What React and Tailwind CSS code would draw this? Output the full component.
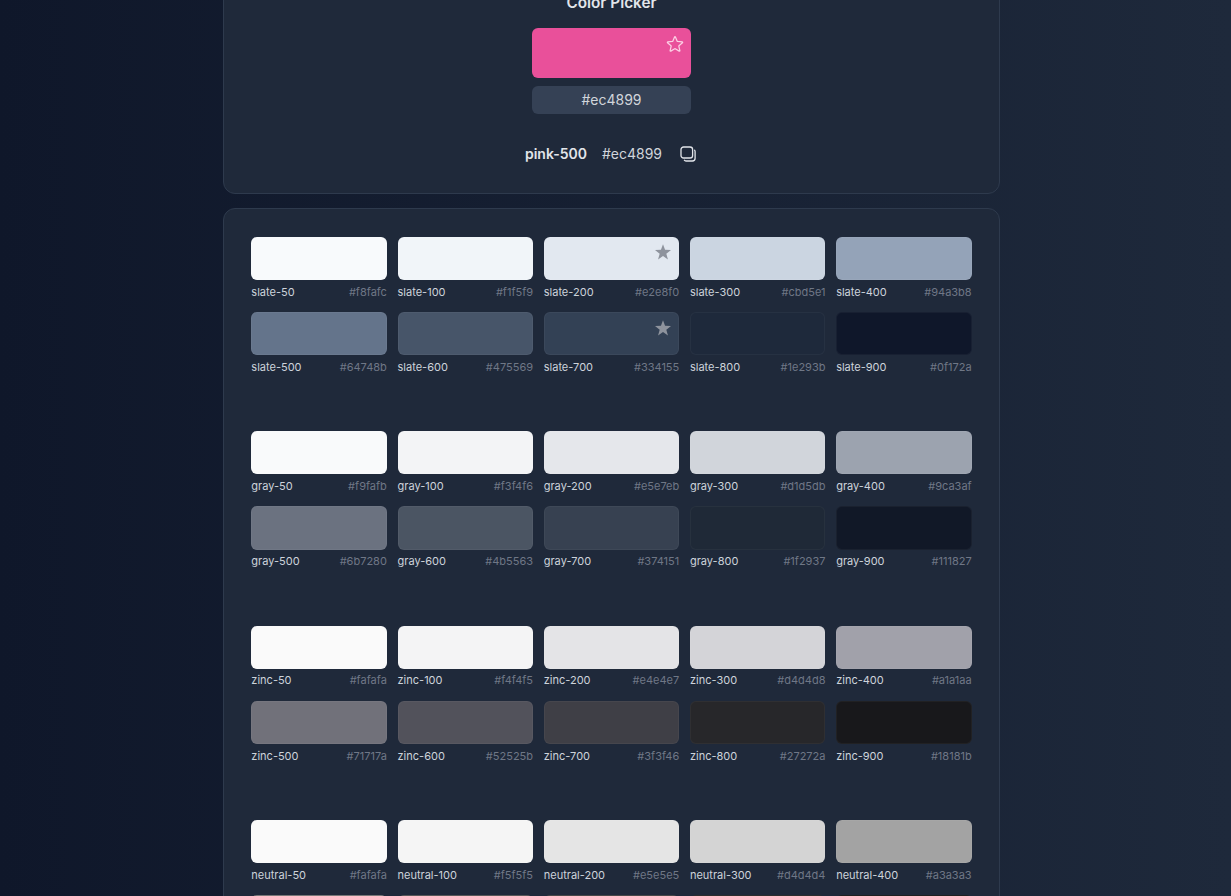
import { HiOutlineStar } from "react-icons/hi2";

const palettes = [
  {
    name: "slate",
    colors: ["#f8fafc", "#f1f5f9", "#e2e8f0", "#cbd5e1", "#94a3b8", "#64748b", "#475569", "#334155", "#1e293b", "#0f172a"],
    starred: [200, 700],
  },
  {
    name: "gray",
    colors: ["#f9fafb", "#f3f4f6", "#e5e7eb", "#d1d5db", "#9ca3af", "#6b7280", "#4b5563", "#374151", "#1f2937", "#111827"],
  },
  {
    name: "zinc",
    colors: ["#fafafa", "#f4f4f5", "#e4e4e7", "#d4d4d8", "#a1a1aa", "#71717a", "#52525b", "#3f3f46", "#27272a", "#18181b"],
  },
  {
    name: "neutral",
    colors: ["#fafafa", "#f5f5f5", "#e5e5e5", "#d4d4d4", "#a3a3a3", "#737373", "#525252", "#404040", "#262626", "#171717"],
  },
];

const shades = [50, 100, 200, 300, 400, 500, 600, 700, 800, 900];

function FilledStar() {
  return (
    <svg viewBox="0 0 16 16" className="absolute top-[6.5px] right-[7px] w-4 h-4 text-[#8e939d]">
      <polygon
        fill="currentColor"
        points="8,0.2 10.06,5.77 16,6 11.33,9.68 12.94,15.4 8,12.1 3.06,15.4 4.67,9.68 0,6 5.94,5.77"
      />
    </svg>
  );
}

function CopyIcon() {
  return (
    <svg viewBox="0 0 16 16" fill="none" stroke="currentColor" strokeWidth="1.3" className="ml-[3px] mr-[2px] w-4 h-4 text-[#e2e5ea]">
      <rect x="1" y="1" width="11.6" height="11" rx="2.6" />
      <path d="M14.6 4.2c.3.4.5.9.5 1.5v6.6c0 1.5-1.2 2.7-2.7 2.7H6.2c-.7 0-1.3-.3-1.8-.7" strokeLinecap="round" />
    </svg>
  );
}

function Swatch({ name, shade, hex, starred }) {
  return (
    <div>
      <div
        className="relative h-[43.3px] rounded-md border border-white/[0.04]"
        style={{ backgroundColor: hex }}
      >
        {starred && <FilledStar />}
      </div>
      <div className="mt-[4.7px] h-[15px] flex items-center justify-between text-[11px] leading-[15px]">
        <span className="text-[#cdd3db]">{name}-{shade}</span>
        <span className="text-[#6f7786]">{hex}</span>
      </div>
    </div>
  );
}

export default function App() {
  return (
    <div
      className="h-screen overflow-hidden bg-gradient-to-r from-[#0f172a] to-[#1e293b] flex justify-center pr-2"
      style={{ fontFamily: "Inter, 'Liberation Sans', sans-serif" }}
    >
      <div className="w-[777px] shrink-0 -mt-[37px] flex flex-col gap-[14px]">
        {/* Picker */}
        <div className="shrink-0 rounded-xl border border-[#2e3a4d] bg-[#1f293a] p-[27px] flex flex-col items-center">
          <h1 className="h-6 mb-[13px] text-[15.3px] leading-6 font-semibold text-[#e2e5ea]">Color Picker</h1>
          <div className="relative w-[159px] h-[50px] rounded-md bg-[#e9509a]">
            <HiOutlineStar className="absolute top-[6px] right-[6px] w-[20px] h-[20px] text-[#fbd0e4]" />
          </div>
          <div className="mt-2 w-[159px] h-7 rounded-md bg-[#354155] text-center text-sm leading-7 text-[#d1d5db]">
            #ec4899
          </div>
          <div className="mt-7 h-6 flex items-center gap-[15px] text-sm">
            <span className="font-semibold text-[#e2e5ea]">pink-500</span>
            <span className="text-[#d1d5db]">#ec4899</span>
            <CopyIcon />
          </div>
        </div>

        {/* Palettes */}
        <div className="shrink-0 rounded-xl border border-[#2e3a4d] bg-[#1f293a] px-[27.35px] pt-[27.7px] pb-[27px] flex flex-col gap-[56.05px]">
          {palettes.map((p) => (
            <div key={p.name} className="grid grid-cols-5 gap-x-[10.7px] gap-y-[12.4px]">
              {p.colors.map((hex, i) => (
                <Swatch
                  key={shades[i]}
                  name={p.name}
                  shade={shades[i]}
                  hex={hex}
                  starred={p.starred?.includes(shades[i])}
                />
              ))}
            </div>
          ))}
        </div>
      </div>
    </div>
  );
}
